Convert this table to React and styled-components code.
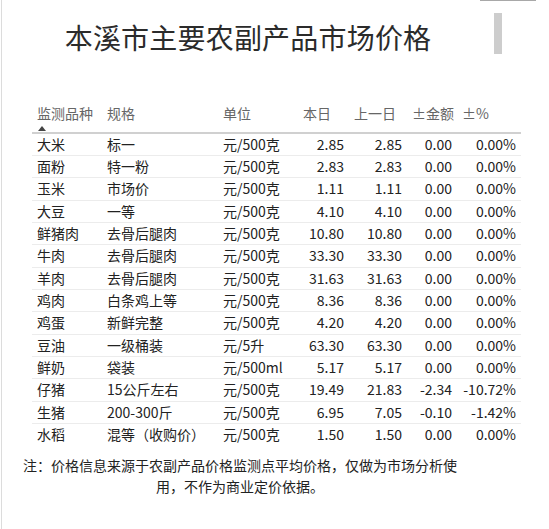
import React from 'react';
import styled, { createGlobalStyle } from 'styled-components';

const GlobalStyle = createGlobalStyle`
  html, body {
    margin: 0;
    padding: 0;
    background: #ffffff;
  }
  body {
    font-family: "Noto Sans CJK SC", "Noto Sans", sans-serif;
    color: #222;
  }
`;

const Page = styled.div`
  position: relative;
  margin-left: 1px;
  border-left: 1px solid #dcdcdc;
  min-height: 529px;
  box-sizing: border-box;
  overflow: hidden;
`;

const TopLine = styled.div`
  position: absolute;
  top: 0;
  left: 478px;
  width: 56px;
  height: 1px;
  background: #a8a8a8;
`;

const ScrollThumb = styled.div`
  position: absolute;
  top: 13px;
  left: 492px;
  width: 8px;
  height: 41px;
  background: #cdcdcd;
`;

const Title = styled.h1`
  margin: 0;
  padding: 17px 0 0 0;
  width: 492px;
  text-align: center;
  font-size: 28px;
  line-height: 40px;
  font-weight: 400;
  color: #2b2b2b;
  letter-spacing: 0.2px;
`;

const Table = styled.table`
  margin: 43px 0 0 30px;
  width: 489px;
  border-collapse: collapse;
  table-layout: fixed;
  font-size: 14px;
`;

const Th = styled.th`
  height: 33px;
  padding: 3px 5px 0;
  box-sizing: border-box;
  vertical-align: top;
  text-align: left;
  font-weight: 400;
  color: #666;
  line-height: 20px;
  border-bottom: 2px solid #d0d0d0;
  white-space: nowrap;
`;

const SortArrow = styled.span`
  display: block;
  width: 0;
  height: 0;
  margin: 3px 0 0 1px;
  border-left: 4px solid transparent;
  border-right: 4px solid transparent;
  border-bottom: 5px solid #444;
`;

const Tr = styled.tr`
  & + & td {
    border-top: 1px solid #ececec;
  }
`;

const Td = styled.td`
  height: 22.33px;
  padding: 0 5px;
  box-sizing: border-box;
  line-height: 21px;
  color: #222;
  white-space: nowrap;
  text-align: ${(p) => (p.$num ? 'right' : 'left')};
`;

const Note = styled.p`
  margin: 9px 0 0 18px;
  width: 440px;
  text-align: center;
  font-size: 14px;
  line-height: 21px;
  color: #222;
`;

const rows = [
  ['大米', '标一', '元/500克', '2.85', '2.85', '0.00', '0.00%'],
  ['面粉', '特一粉', '元/500克', '2.83', '2.83', '0.00', '0.00%'],
  ['玉米', '市场价', '元/500克', '1.11', '1.11', '0.00', '0.00%'],
  ['大豆', '一等', '元/500克', '4.10', '4.10', '0.00', '0.00%'],
  ['鲜猪肉', '去骨后腿肉', '元/500克', '10.80', '10.80', '0.00', '0.00%'],
  ['牛肉', '去骨后腿肉', '元/500克', '33.30', '33.30', '0.00', '0.00%'],
  ['羊肉', '去骨后腿肉', '元/500克', '31.63', '31.63', '0.00', '0.00%'],
  ['鸡肉', '白条鸡上等', '元/500克', '8.36', '8.36', '0.00', '0.00%'],
  ['鸡蛋', '新鲜完整', '元/500克', '4.20', '4.20', '0.00', '0.00%'],
  ['豆油', '一级桶装', '元/5升', '63.30', '63.30', '0.00', '0.00%'],
  ['鲜奶', '袋装', '元/500ml', '5.17', '5.17', '0.00', '0.00%'],
  ['仔猪', '15公斤左右', '元/500克', '19.49', '21.83', '-2.34', '-10.72%'],
  ['生猪', '200-300斤', '元/500克', '6.95', '7.05', '-0.10', '-1.42%'],
  ['水稻', '混等（收购价）', '元/500克', '1.50', '1.50', '0.00', '0.00%'],
];

const columns = [
  { label: '监测品种', width: 70 },
  { label: '规格', width: 116 },
  { label: '单位', width: 80 },
  { label: '本日', width: 51, num: true },
  { label: '上一日', width: 58, num: true },
  { label: '±金额', width: 50, num: true },
  { label: '±%', width: 64, num: true },
];

export default function App() {
  return (
    <Page>
      <GlobalStyle />
      <TopLine />
      <ScrollThumb />
      <Title>本溪市主要农副产品市场价格</Title>
      <Table>
        <colgroup>
          {columns.map((c) => (
            <col key={c.label} style={{ width: c.width }} />
          ))}
        </colgroup>
        <thead>
          <tr>
            {columns.map((c, i) => (
              <Th key={c.label}>
                {c.label}
                {i === 0 && <SortArrow />}
              </Th>
            ))}
          </tr>
        </thead>
        <tbody>
          {rows.map((r) => (
            <Tr key={r[0]}>
              {r.map((v, i) => (
                <Td key={i} $num={columns[i].num}>
                  {v}
                </Td>
              ))}
            </Tr>
          ))}
        </tbody>
      </Table>
      <Note>
        注：价格信息来源于农副产品价格监测点平均价格，仅做为市场分析使用，不作为商业定价依据。
      </Note>
    </Page>
  );
}
